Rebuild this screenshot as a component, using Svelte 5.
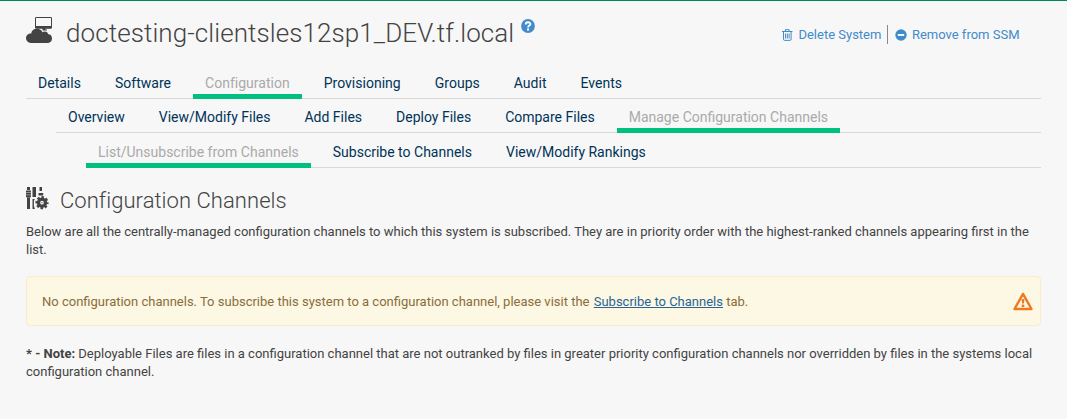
<script>
  const rows = [
    { level: 1, active: 'Configuration', tabs: ['Details', 'Software', 'Configuration', 'Provisioning', 'Groups', 'Audit', 'Events'] },
    { level: 2, active: 'Manage Configuration Channels', tabs: ['Overview', 'View/Modify Files', 'Add Files', 'Deploy Files', 'Compare Files', 'Manage Configuration Channels'] },
    { level: 3, active: 'List/Unsubscribe from Channels', tabs: ['List/Unsubscribe from Channels', 'Subscribe to Channels', 'View/Modify Rankings'] }
  ];
</script>

<main>
  <header>
    <svg class="system" width="28" height="28" viewBox="0 0 28 28" fill="#434343">
      <path fill-rule="evenodd" d="M10.200 1h14.600q1.200 0 1.200 1.200v9.300q0 1.200-1.200 1.200H10.200Q9 12.700 9 11.500V2.200Q9 1 10.200 1ZM10 2v8h15V2Z" />
      <path d="M16.500 12h3v1.500h1.500v1h-4.500Z" />
      <path d="M4.800 27A4.800 4.800 0 0 1 0 22.200C0 19.500 2.200 17.400 5.300 17.500 5.500 14.700 7.800 12.800 11 12.800c2.700 0 4.700 1.300 5.400 3.500 2-1.800 5.600-.8 5.600 1.800C24.500 18.200 26 20 26 22.400 26 25.200 24 27 21.300 27Z" />
    </svg>
    <h1>doctesting-clientsles12sp1_DEV.tf.local</h1>
    <svg class="help" width="14" height="14" viewBox="0 0 14 14">
      <circle cx="7" cy="7" r="6.900" fill="#428bca" />
      <path d="M4.700 5.500C4.700 2.500 9.400 2.600 9.400 5.100 9.400 6.700 7.100 6.500 7.100 8.500" fill="none" stroke="#fff" stroke-width="1.900" />
      <path d="M6 9.500h2.100v2H6Z" fill="#fff" />
    </svg>
    <div class="actions">
      <a href="#delete">
        <svg width="11" height="12" viewBox="0 0 11 12" fill="none" stroke="#428bca">
          <path d="M0 2.500h10.500M3.500 2V.7h3.600V2M1.500 2.500v7.700q0 1.200 1.200 1.200h5.200q1.200 0 1.200-1.200V2.500M3.500 4.500v5M5.300 4.500v5M7.100 4.500v5" />
        </svg>
        <span>Delete System</span>
      </a>
      <a class="remove" href="#remove">
        <svg width="12" height="12" viewBox="0 0 12 12"><circle cx="6" cy="6" r="5.700" fill="#428bca" /><path d="M2.800 5h6.400v1.900H2.800Z" fill="#fff" /></svg>
        <span>Remove from SSM</span>
      </a>
    </div>
  </header>

  <nav>
    {#each rows as row}
      <ul class="level{row.level}">
        {#each row.tabs as tab}
          <li class:active={tab === row.active}><a href="#tab">{tab}</a></li>
        {/each}
      </ul>
    {/each}
  </nav>

  <section>
    <div class="heading">
      <svg width="23" height="23" viewBox="0 0 23 23" fill="#434343">
        <path d="M1 0h3v3H1ZM0 3.500h4.900v6.800H0ZM1 10.500h3V22H1ZM6.500 0H10v10H6.500ZM13.500 0h2.500v4h-2.500ZM12.500 6h4.700v2.600h-4.700ZM6.500 12h2.300l-.9 2v5l1 3H6.500Z" />
        <path d="M0 5.500h4.900M0 7.900h4.900" stroke="#b5b5b5" stroke-width=".7" />
        <circle cx="16" cy="15.700" r="3.500" fill="none" stroke="#434343" stroke-width="3.300" />
        <circle cx="16" cy="15.700" r="5.500" fill="none" stroke="#434343" stroke-width="2.200" stroke-dasharray="2.500 1.820" stroke-dashoffset="1.250" />
        <circle cx="16" cy="15.700" r=".6" />
      </svg>
      <h2>Configuration Channels</h2>
    </div>
    <p class="intro">Below are all the centrally-managed configuration channels to which this system is subscribed. They are in priority order with the highest-ranked channels appearing first in the list.</p>
    <div class="alert">
      <span>No configuration channels. To subscribe this system to a configuration channel, please visit the <a href="#subscribe">Subscribe to Channels</a> tab.</span>
      <svg width="20" height="19" viewBox="0 0 20 19">
        <path d="M10 1.900 18.500 17H1.500Z" fill="none" stroke="#ef7820" stroke-width="2.400" stroke-linejoin="round" />
        <path d="M8.600 7h2.800l-.5 4.500H9.100ZM8.700 12.400h2.600v2.500H8.700Z" fill="#ef7820" />
      </svg>
    </div>
    <p class="note"><strong>* - Note:</strong> Deployable Files are files in a configuration channel that are not outranked by files in greater priority configuration channels nor overridden by files in the systems local configuration channel.</p>
  </section>
</main>

<style>
  :global(body) { margin: 0; background: #f7f7f7; }
  main {
    box-sizing: border-box;
    height: 419px;
    padding: 0 26px;
    overflow: hidden;
    border-top: 1px solid #008660;
    background: #f7f7f7;
    color: #434343;
    font: 13px/18px Roboto, sans-serif;
  }
  header { display: flex; height: 67px; align-items: flex-start; }
  svg { display: block; flex: none; }
  .system { margin-top: 15px; }
  h1 { margin: 14px 0 0 12px; font-size: 26px; line-height: 36px; font-weight: 300; letter-spacing: .09px; white-space: nowrap; }
  .help { margin: 18px 0 0 7px; }
  .actions { display: flex; margin: 24px 21.5px 0 auto; line-height: 19px; }
  .actions a { display: flex; align-items: center; color: #428bca; text-decoration: none; white-space: nowrap; }
  .actions span { margin-left: 5px; }
  .actions .remove { margin-left: 6px; padding-left: 6.5px; border-left: 1px solid #888; }
  ul { display: flex; gap: 10px; box-sizing: border-box; height: 34px; margin: 0; padding: 0; border-bottom: 1px solid #d9d9d9; list-style: none; }
  .level1 { height: 31px; letter-spacing: .016px; }
  .level2 { margin-left: 30px; }
  .level3 { height: 35px; margin-left: 60px; }
  li { box-sizing: border-box; height: 100%; padding: 0 12px; font-size: 14px; line-height: 20px; white-space: nowrap; }
  .level1 li { padding-top: 5px; height: 31px; }
  .level2 li { padding-top: 8px; height: 34px; }
  .level3 li { padding-top: 9px; height: 35px; }
  li a { color: #003358; text-decoration: none; }
  .active { border-bottom: 5px solid #00c081; }
  .active a { color: #aaa; }
  .heading { display: flex; height: 55px; align-items: flex-start; }
  .heading svg { margin-top: 19px; }
  h2 { margin: 18px 0 0 11px; font-size: 22px; line-height: 30px; font-weight: 300; letter-spacing: .05px; }
  p { margin: 0; }
  .alert {
    display: flex;
    align-items: center;
    justify-content: space-between;
    box-sizing: border-box;
    height: 50px;
    margin: 17px 0 19px;
    padding: 0 7px 0 15px;
    border: 1px solid #faebcc;
    border-radius: 4px;
    background: #fcf8e3;
    color: #8a6d3b;
  }
  .alert span { padding-top: 2px; }
  .alert a { margin-left: 1px; color: #2a6496; text-decoration: underline; }
</style>
